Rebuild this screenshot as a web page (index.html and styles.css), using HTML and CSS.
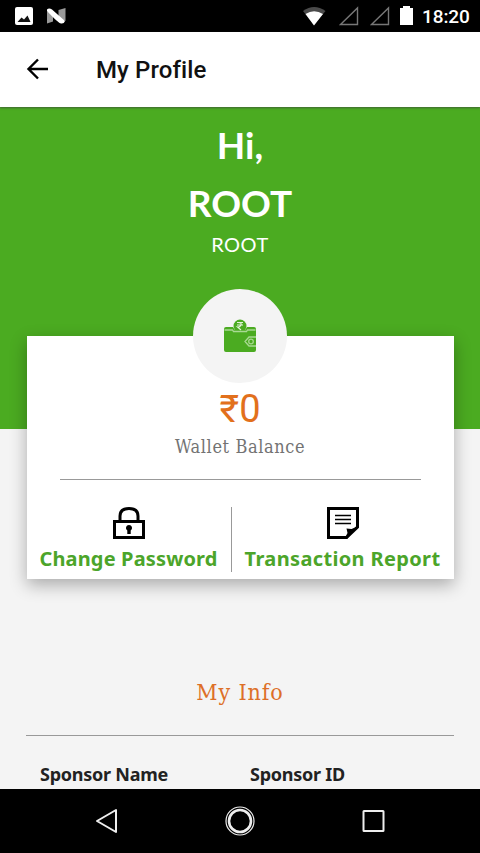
FILE: index.html
```html
<!DOCTYPE html>
<html lang="en">
<head>
<meta charset="utf-8">
<title>My Profile</title>
<link rel="stylesheet" href="styles.css">
</head>
<body>
<div class="phone">
  <div class="status">
    <svg class="status-left" width="60" height="32" viewBox="0 0 60 32">
      <rect x="15" y="7" width="18" height="18" rx="2" fill="#fff"/>
      <path d="M17.500 22l4-4.500 2.500 2 3.500-4 3 6.500z" fill="#111"/>
      <path d="M47 11v12.500l6-2V14z M65.500 8v13l-7-3V10z" fill="#999"/>
      <path d="M47 9.500q2-2 5 0L65 21q-1 3-4 2.500Q58 23 47 11z" fill="#fff"/>
    </svg>
    <svg class="status-right" width="120" height="32" viewBox="300 0 120 32">
      <path d="M303 11Q314 3 325.500 11L314 25z" fill="#4a4a4a"/>
      <path d="M305.500 14Q314 8.500 323 14L314 25.500z" fill="#fff"/>
      <path d="M340.500 24.500L357.500 8V24.500z M371.500 24.500L388.500 8V24.500z" fill="none" stroke="#777" stroke-width="1.400"/>
      <path d="M400 8h3V6h7v2h3v17h-13z" fill="#fff"/>
    </svg>
    <span class="clock">18:20</span>
  </div>
  <header class="appbar">
    <svg width="24" height="24" viewBox="0 0 24 24"><path d="M23 12H3.500M13 2.500L3.500 12l9.500 9.500" fill="none" stroke="#000" stroke-width="2.400"/></svg>
    <h1>My Profile</h1>
  </header>
  <main class="content">
    <section class="hero">
      <div class="hi">Hi,</div>
      <div class="name">ROOT</div>
      <div class="user">ROOT</div>
    </section>
    <section class="card">
      <div class="badge">
        <svg width="34" height="34" viewBox="0 0 34 34">
          <circle cx="17" cy="7" r="6.500" fill="#4bab21"/>
          <path d="M1 10q0-2 2-2h7l1.500 2.500h11L24 8h7q2 0 2 2v21q0 2-2 2H3q-2 0-2-2z" fill="#4bab21"/>
          <path d="M14 3.500h6M14 6h6M15 3.500q4 0 3 2.500t-3.500 2l3.500 3" fill="none" stroke="#e4f4dc" stroke-width="1.100"/>
          <path d="M1.500 11h8l1 1.500h13l1-1.500h8M33 18h-7l-4 4.500 4 4.500h7" fill="none" stroke="#a8d993" stroke-width="1.300"/>
          <circle cx="28" cy="22.500" r="2.300" fill="none" stroke="#a5d78d" stroke-width="1.300"/>
        </svg>
      </div>
      <div class="amount">₹0</div>
      <div class="balance">Wallet Balance</div>
      <div class="actions">
        <div class="action">
          <svg width="34" height="34" viewBox="0 0 34 34">
            <path d="M8 15V10Q8 2.500 17 2.500T26 10v5" fill="none" stroke="#000" stroke-width="3"/>
            <path d="M2.500 15.500h29v16h-29z" fill="none" stroke="#000" stroke-width="3"/>
            <path d="M17 19a3 3 0 0 1 1.700 5.500V28h-3.400V24.500A3 3 0 0 1 17 19z"/>
          </svg>
          <span class="pw">Change Password</span>
        </div>
        <div class="action">
          <svg width="34" height="34" viewBox="0 0 34 34">
            <path d="M2.500 2.500h29V21L20.500 31.500h-18z" fill="none" stroke="#000" stroke-width="3"/>
            <path d="M19 32l2.500-5-1-4.500 5 .5 6-2.500L21 33z"/>
            <path d="M9 9.500h16M9 13.500h16M9 17.500h16" stroke="#000" stroke-width="1.300"/>
          </svg>
          <span class="tr">Transaction Report</span>
        </div>
      </div>
    </section>
    <section class="info">
      <h2>My Info</h2>
      <div class="columns"><span class="sname">Sponsor Name</span><span class="sid">Sponsor ID</span></div>
    </section>
  </main>
  <nav class="nav">
    <svg width="480" height="64" viewBox="0 0 480 64" fill="none" stroke="#eee" stroke-width="2">
      <path d="M97 32L116 21V43z" stroke-linejoin="round"/>
      <circle cx="240" cy="32" r="14" stroke-width="1.200"/>
      <circle cx="240" cy="32" r="11" stroke-width="2.600"/>
      <rect x="363.500" y="22" width="20" height="20" rx=".5"/>
    </svg>
  </nav>
</div>
</body>
</html>
```
FILE: styles.css
```css
* { box-sizing: border-box; }
body { margin: 0; font-family: Roboto, sans-serif; }
svg { display: block; flex: none; }
.phone { width: 480px; height: 853px; display: flex; flex-direction: column; overflow: hidden; background: #f4f4f4; }
.status { height: 32px; flex: none; display: flex; align-items: center; background: #000; color: #fff; }
.status-left { overflow: visible; }
.status-right { margin-left: 240px; }
.clock { margin-left: 2px; font-size: 19px; font-weight: 500; line-height: 32px; letter-spacing: -.1px; padding-top: 2px; }
.appbar { height: 75px; flex: none; display: flex; align-items: center; gap: 47px; padding: 0 0 1px 25px; background: #fff; box-shadow: 0 1px 2px rgba(60,70,60,.7); z-index: 1; }
.appbar h1 { margin: 2px 0 0; font-size: 24px; font-weight: 500; line-height: 30px; letter-spacing: .1px; color: #111; }
.content { flex: 1; min-height: 0; overflow: hidden; }
.hero { height: 322px; padding-top: 9px; background: #4bab21; color: #fff; text-align: center; font-family: Lato, sans-serif; }
.hi, .name { font-size: 37px; font-weight: 700; line-height: 58px; }
.user { font-size: 20px; line-height: 24px; letter-spacing: .5px; }
.card { position: relative; width: 427px; height: 243px; margin: -93px 0 0 26.5px; padding-top: 51px; background: #fff; box-shadow: 0 6px 16px rgba(0,0,0,.3); text-align: center; }
.badge { position: absolute; left: 166px; top: -47px; width: 94px; height: 94px; border-radius: 50%; background: #f4f4f4; display: flex; align-items: center; justify-content: center; }
.amount { font-size: 38px; line-height: 44px; color: #e2701c; }
.balance { height: 49px; margin: 0 33px; padding-top: 4px; border-bottom: 1px solid #999; font-family: "DejaVu Serif Condensed", "DejaVu Serif", serif; font-stretch: condensed; font-size: 18px; line-height: 24px; letter-spacing: .6px; color: #737373; }
.actions { display: flex; margin-top: 27px; }
.action { height: 65px; flex: 1; display: flex; flex-direction: column; align-items: center; font-family: "Noto Sans", sans-serif; font-size: 20px; font-weight: 700; line-height: 38px; letter-spacing: .15px; color: #4ca52a; white-space: nowrap; }
.action:first-child { flex: 0 0 205px; border-right: 1px solid #999; }
.action svg { margin-top: -1px; }
.tr { letter-spacing: .35px; }
.info { margin: 96px 26px 0; }
.info h2 { height: 61px; margin: 0; border-bottom: 1px solid #999; text-align: center; font-family: "DejaVu Serif Condensed", "DejaVu Serif", serif; font-stretch: condensed; font-size: 23px; font-weight: 400; line-height: 34px; letter-spacing: .9px; color: #dd6f27; }
.columns { display: grid; grid-template-columns: 210px 1fr; padding: 25px 14px 0; font-family: "Noto Sans", sans-serif; font-size: 18px; font-weight: 700; line-height: 26px; letter-spacing: -.25px; color: #222; }
.nav { height: 64px; flex: none; background: #000; }
```
